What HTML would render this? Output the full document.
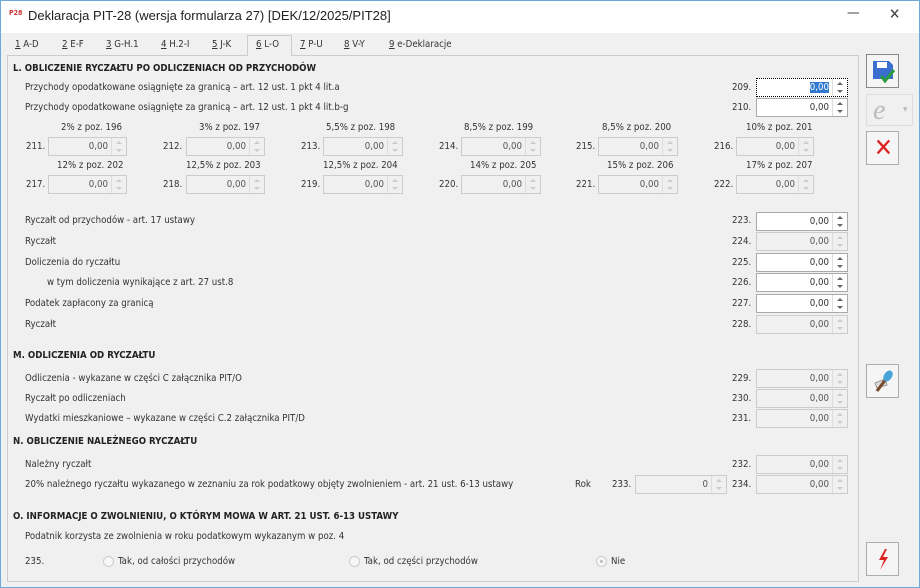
<!DOCTYPE html>
<html><head><meta charset="utf-8"><style>
*{box-sizing:border-box;margin:0;padding:0}
body{width:920px;height:588px;background:#f0f0f0;font-family:Tahoma,"DejaVu Sans Condensed","Liberation Sans",sans-serif;font-size:9.6px;color:#333;position:relative;overflow:hidden}
.win{position:absolute;left:0;top:0;width:920px;height:588px;border:1px solid #6fa8dc}
.t{position:absolute;white-space:nowrap}
.h{position:absolute;font-weight:bold;white-space:nowrap;font-size:9.6px;color:#222}
.i{position:absolute;height:19px;background:#fff;border:1px solid #a9a9a9}
.i.d{background:#f0f0f0;border-color:#ccc;color:#555}
.i .v{position:absolute;right:18px;top:3px}
.i .s{position:absolute;right:0;top:0;width:15px;height:17px;border-left:1px solid #ddd}
.i .s:before{content:"";position:absolute;left:4px;top:3px;border:3px solid transparent;border-bottom:3px solid #666;border-top:0}
.i .s:after{content:"";position:absolute;left:4px;top:11px;border:3px solid transparent;border-top:3px solid #666;border-bottom:0}
.i.d .s:before{border-bottom-color:#ccc}.i.d .s:after{border-top-color:#ccc}
.tab{position:absolute;top:38px}
.tab u{text-decoration:underline}
.btn{position:absolute;width:33px;height:34px;border:1px solid #adadad;background:#f5f5f5}
.r{position:absolute;width:11px;height:11px;border:1px solid #ccc;border-radius:50%;background:#f7f7f7}
</style></head><body><div class="win">
<div style="position:absolute;left:0;top:0;width:918px;height:32px;background:#fff"></div>
<div class="t" style="left:8px;top:8px;font-size:7px;color:#c33;font-weight:bold">P28</div>
<div class="t" style="left:27px;top:7px;font-size:13px;color:#222;font-family:'Liberation Sans',sans-serif">Deklaracja PIT-28 (wersja formularza 27) [DEK/12/2025/PIT28]</div>
<div class="t" style="left:846px;top:4px;font-size:14px;color:#444">—</div>
<div class="t" style="left:888px;top:4px;font-size:15px;color:#444">✕</div>
<div style="position:absolute;left:0;top:32px;width:918px;height:22px;background:#f0f0f0"></div>
<div style="position:absolute;left:246px;top:34px;width:45px;height:21px;background:#f0f0f0;border:1px solid #ccc;border-bottom:none;z-index:2"></div>
<div class="tab" style="left:14px"><u>1</u> A-D</div>
<div class="tab" style="left:61px"><u>2</u> E-F</div>
<div class="tab" style="left:105px"><u>3</u> G-H.1</div>
<div class="tab" style="left:160px"><u>4</u> H.2-I</div>
<div class="tab" style="left:211px"><u>5</u> J-K</div>
<div class="tab" style="left:255px;z-index:3"><u>6</u> L-O</div>
<div class="tab" style="left:299px"><u>7</u> P-U</div>
<div class="tab" style="left:343px"><u>8</u> V-Y</div>
<div class="tab" style="left:388px"><u>9</u> e-Deklaracje</div>
<div style="position:absolute;left:6px;top:54px;width:852px;height:527px;border:1px solid #ccc;background:#f0f0f0"></div>

<div class="h" style="left:12px;top:62px">L. OBLICZENIE RYCZAŁTU PO ODLICZENIACH OD PRZYCHODÓW</div>
<div class="t" style="left:24px;top:81px">Przychody opodatkowane osiągnięte za granicą – art. 12 ust. 1 pkt 4 lit.a</div>
<div class="t" style="left:24px;top:101px">Przychody opodatkowane osiągnięte za granicą – art. 12 ust. 1 pkt 4 lit.b-g</div>
<div class="t" style="left:731px;top:81px">209.</div>
<div class="i" style="left:755px;top:77px;width:92px;border:1px dotted #000"><span class="v" style="background:#3078d0;color:#fff">0,00</span><span class="s"></span></div>
<div class="t" style="left:731px;top:101px">210.</div>
<div class="i" style="left:755px;top:97px;width:92px"><span class="v">0,00</span><span class="s"></span></div>

<div class="t" style="left:60px;top:121px">2% z poz. 196</div>
<div class="t" style="left:198px;top:121px">3% z poz. 197</div>
<div class="t" style="left:325px;top:121px">5,5% z poz. 198</div>
<div class="t" style="left:463px;top:121px">8,5% z poz. 199</div>
<div class="t" style="left:601px;top:121px">8,5% z poz. 200</div>
<div class="t" style="left:745px;top:121px">10% z poz. 201</div>
<div class="t" style="left:25px;top:140px">211.</div><div class="i d" style="left:47px;top:136px;width:79px"><span class="v">0,00</span><span class="s"></span></div>
<div class="t" style="left:162px;top:140px">212.</div><div class="i d" style="left:185px;top:136px;width:79px"><span class="v">0,00</span><span class="s"></span></div>
<div class="t" style="left:300px;top:140px">213.</div><div class="i d" style="left:322px;top:136px;width:80px"><span class="v">0,00</span><span class="s"></span></div>
<div class="t" style="left:438px;top:140px">214.</div><div class="i d" style="left:460px;top:136px;width:80px"><span class="v">0,00</span><span class="s"></span></div>
<div class="t" style="left:575px;top:140px">215.</div><div class="i d" style="left:597px;top:136px;width:80px"><span class="v">0,00</span><span class="s"></span></div>
<div class="t" style="left:713px;top:140px">216.</div><div class="i d" style="left:735px;top:136px;width:78px"><span class="v">0,00</span><span class="s"></span></div>

<div class="t" style="left:56px;top:159px">12% z poz. 202</div>
<div class="t" style="left:185px;top:159px">12,5% z poz. 203</div>
<div class="t" style="left:322px;top:159px">12,5% z poz. 204</div>
<div class="t" style="left:469px;top:159px">14% z poz. 205</div>
<div class="t" style="left:606px;top:159px">15% z poz. 206</div>
<div class="t" style="left:745px;top:159px">17% z poz. 207</div>
<div class="t" style="left:25px;top:178px">217.</div><div class="i d" style="left:47px;top:174px;width:79px"><span class="v">0,00</span><span class="s"></span></div>
<div class="t" style="left:162px;top:178px">218.</div><div class="i d" style="left:185px;top:174px;width:79px"><span class="v">0,00</span><span class="s"></span></div>
<div class="t" style="left:300px;top:178px">219.</div><div class="i d" style="left:322px;top:174px;width:80px"><span class="v">0,00</span><span class="s"></span></div>
<div class="t" style="left:438px;top:178px">220.</div><div class="i d" style="left:460px;top:174px;width:80px"><span class="v">0,00</span><span class="s"></span></div>
<div class="t" style="left:575px;top:178px">221.</div><div class="i d" style="left:597px;top:174px;width:80px"><span class="v">0,00</span><span class="s"></span></div>
<div class="t" style="left:713px;top:178px">222.</div><div class="i d" style="left:735px;top:174px;width:78px"><span class="v">0,00</span><span class="s"></span></div>

<div class="t" style="left:24px;top:214px">Ryczałt od przychodów - art. 17 ustawy</div>
<div class="t" style="left:731px;top:214px">223.</div><div class="i" style="left:755px;top:211px;width:92px"><span class="v">0,00</span><span class="s"></span></div>
<div class="t" style="left:24px;top:235px">Ryczałt</div>
<div class="t" style="left:731px;top:235px">224.</div><div class="i d" style="left:755px;top:231px;width:92px"><span class="v">0,00</span><span class="s"></span></div>
<div class="t" style="left:24px;top:256px">Doliczenia do ryczałtu</div>
<div class="t" style="left:731px;top:256px">225.</div><div class="i" style="left:755px;top:252px;width:92px"><span class="v">0,00</span><span class="s"></span></div>
<div class="t" style="left:46px;top:276px">w tym doliczenia wynikające z art. 27 ust.8</div>
<div class="t" style="left:731px;top:276px">226.</div><div class="i" style="left:755px;top:272px;width:92px"><span class="v">0,00</span><span class="s"></span></div>
<div class="t" style="left:24px;top:297px">Podatek zapłacony za granicą</div>
<div class="t" style="left:731px;top:297px">227.</div><div class="i" style="left:755px;top:293px;width:92px"><span class="v">0,00</span><span class="s"></span></div>
<div class="t" style="left:24px;top:318px">Ryczałt</div>
<div class="t" style="left:731px;top:318px">228.</div><div class="i d" style="left:755px;top:314px;width:92px"><span class="v">0,00</span><span class="s"></span></div>

<div class="h" style="left:12px;top:349px">M. ODLICZENIA OD RYCZAŁTU</div>
<div class="t" style="left:24px;top:372px">Odliczenia - wykazane w części C załącznika PIT/O</div>
<div class="t" style="left:731px;top:372px">229.</div><div class="i d" style="left:755px;top:368px;width:92px"><span class="v">0,00</span><span class="s"></span></div>
<div class="t" style="left:24px;top:392px">Ryczałt po odliczeniach</div>
<div class="t" style="left:731px;top:392px">230.</div><div class="i d" style="left:755px;top:388px;width:92px"><span class="v">0,00</span><span class="s"></span></div>
<div class="t" style="left:24px;top:412px">Wydatki mieszkaniowe – wykazane w części C.2 załącznika PIT/D</div>
<div class="t" style="left:731px;top:412px">231.</div><div class="i d" style="left:755px;top:408px;width:92px"><span class="v">0,00</span><span class="s"></span></div>

<div class="h" style="left:12px;top:435px">N. OBLICZENIE NALEŻNEGO RYCZAŁTU</div>
<div class="t" style="left:24px;top:458px">Należny ryczałt</div>
<div class="t" style="left:731px;top:458px">232.</div><div class="i d" style="left:755px;top:454px;width:92px"><span class="v">0,00</span><span class="s"></span></div>
<div class="t" style="left:24px;top:478px">20% należnego ryczałtu wykazanego w zeznaniu za rok podatkowy objęty zwolnieniem - art. 21 ust. 6-13 ustawy</div>
<div class="t" style="left:574px;top:478px">Rok</div>
<div class="t" style="left:611px;top:478px">233.</div><div class="i d" style="left:634px;top:474px;width:92px"><span class="v">0</span><span class="s"></span></div>
<div class="t" style="left:731px;top:478px">234.</div><div class="i d" style="left:755px;top:474px;width:92px"><span class="v">0,00</span><span class="s"></span></div>

<div class="h" style="left:12px;top:510px">O. INFORMACJE O ZWOLNIENIU, O KTÓRYM MOWA W ART. 21 UST. 6-13 USTAWY</div>
<div class="t" style="left:24px;top:530px">Podatnik korzysta ze zwolnienia w roku podatkowym wykazanym w poz. 4</div>
<div class="t" style="left:24px;top:555px">235.</div>
<div class="r" style="left:102px;top:555px"></div><div class="t" style="left:117px;top:555px">Tak, od całości przychodów</div>
<div class="r" style="left:348px;top:555px"></div><div class="t" style="left:363px;top:555px">Tak, od części przychodów</div>
<div class="r" style="left:595px;top:555px"><div style="position:absolute;left:3px;top:3px;width:3px;height:3px;border-radius:50%;background:#bbb"></div></div><div class="t" style="left:610px;top:555px">Nie</div>

<div class="btn" style="left:865px;top:53px;border-color:#888"><svg width="31" height="32" viewBox="0 0 31 32"><path d="M6 6h16l4 4v14H6z" fill="#3a6fd0"/><rect x="10" y="7" width="10" height="6" fill="#fff"/><path d="M14 21l4 5 9-11" stroke="#2a9d3a" stroke-width="3" fill="none"/></svg></div>
<div class="btn" style="left:865px;top:93px;width:47px;height:32px;border-color:#ddd;background:#f0f0f0"><div class="t" style="left:6px;top:0px;font-size:28px;color:#bbb;font-family:'Liberation Serif',serif;font-style:italic">e</div><div class="t" style="left:36px;top:9px;color:#bbb">▾</div></div>
<div class="btn" style="left:865px;top:130px"><div class="t" style="left:7px;top:1px;font-size:25px;color:#d22;font-weight:bold">✕</div></div>
<div class="btn" style="left:865px;top:363px"><svg width="31" height="32" viewBox="0 0 31 32"><path d="M8 18l10-4 2 6-10 3z" fill="#ddd" stroke="#999"/><path d="M10 26l9-12" stroke="#7a4a2a" stroke-width="3"/><ellipse cx="21" cy="11" rx="4" ry="6" transform="rotate(35 21 11)" fill="#4aa3d8"/></svg></div>
<div class="btn" style="left:865px;top:541px"><svg width="31" height="32" viewBox="0 0 31 32"><path d="M18 6l-6 11h5l-4 10 8-13h-5l4-8z" fill="#d22"/></svg></div>
</div></body></html>
